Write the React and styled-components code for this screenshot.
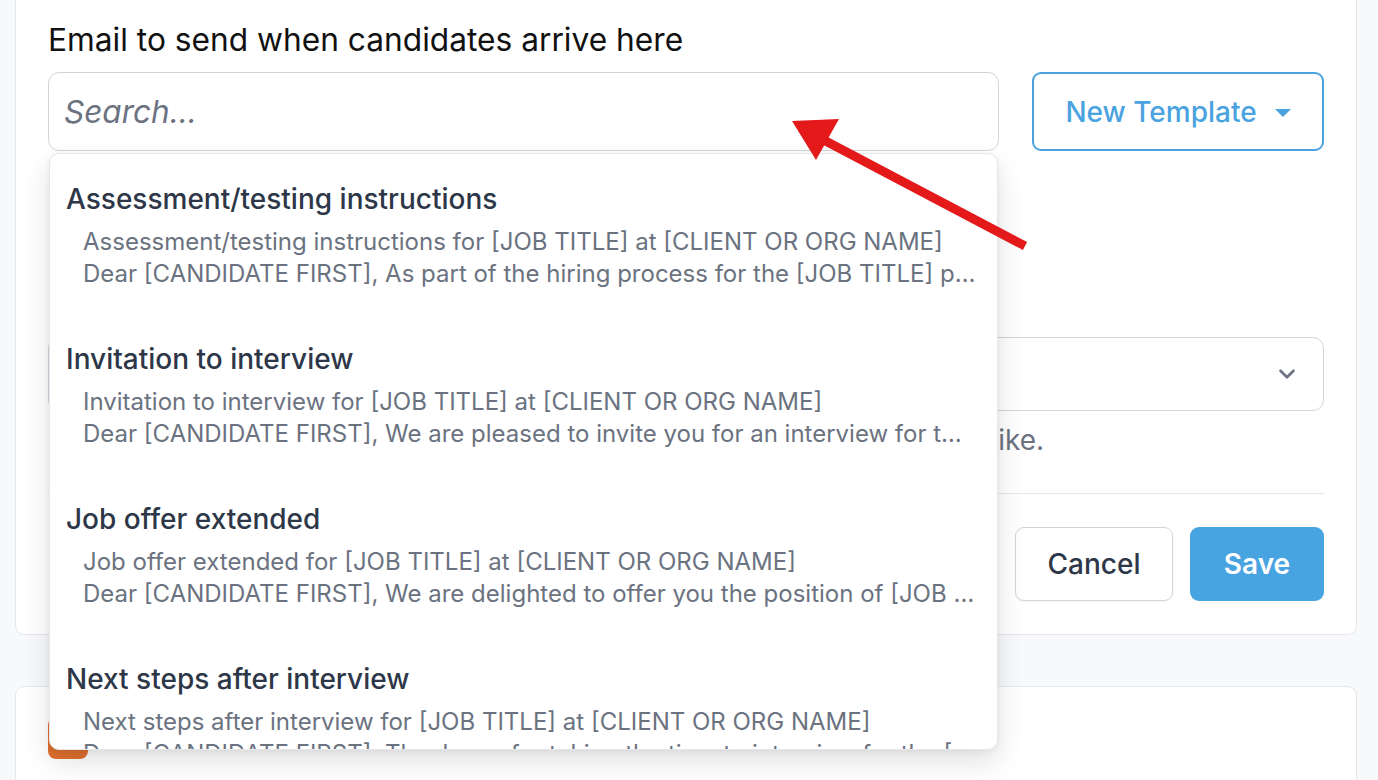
import React from 'react';
import styled, { createGlobalStyle } from 'styled-components';
import { ChevronDown } from 'lucide-react';

const GlobalStyle = createGlobalStyle`
  html, body {
    margin: 0;
    padding: 0;
    background: #f8f9fb;
    font-family: Inter, "Noto Sans", "Liberation Sans", sans-serif;
    -webkit-font-smoothing: antialiased;
  }
  * { box-sizing: border-box; }
`;

const templates = [
  {
    title: 'Assessment/testing instructions',
    subject: 'Assessment/testing instructions for [JOB TITLE] at [CLIENT OR ORG NAME]',
    body: 'Dear [CANDIDATE FIRST], As part of the hiring process for the [JOB TITLE] position, we would like you to complete a short assessment.',
  },
  {
    title: 'Invitation to interview',
    subject: 'Invitation to interview for [JOB TITLE] at [CLIENT OR ORG NAME]',
    body: 'Dear [CANDIDATE FIRST], We are pleased to invite you for an interview for the [JOB TITLE] position at [CLIENT OR ORG NAME].',
  },
  {
    title: 'Job offer extended',
    subject: 'Job offer extended for [JOB TITLE] at [CLIENT OR ORG NAME]',
    body: 'Dear [CANDIDATE FIRST], We are delighted to offer you the position of [JOB TITLE] at [CLIENT OR ORG NAME].',
  },
  {
    title: 'Next steps after interview',
    subject: 'Next steps after interview for [JOB TITLE] at [CLIENT OR ORG NAME]',
    body: 'Dear [CANDIDATE FIRST], Thank you for taking the time to interview for the [JOB TITLE] position with us.',
  },
];

export default function App() {
  return (
    <Page>
      <GlobalStyle />
      <Card>
        <FieldLabel>Email to send when candidates arrive here</FieldLabel>
        <SearchRow>
          <SearchWrap>
            <SearchInput placeholder="Search..." />
            <Dropdown>
              {templates.map((t) => (
                <Option key={t.title}>
                  <OptionTitle>{t.title}</OptionTitle>
                  <OptionLine>{t.subject}</OptionLine>
                  <OptionLine>{t.body}</OptionLine>
                </Option>
              ))}
            </Dropdown>
          </SearchWrap>
          <OutlineButton>
            New Template
            <Caret />
          </OutlineButton>
        </SearchRow>

        <Field>
          <Select>
            <ChevronDown size={26} strokeWidth={2.4} color="#6b7280" />
          </Select>
          <Helper>Choose the sender. You can change this in the settings at any time you like.</Helper>
        </Field>

        <Divider />

        <Actions>
          <CancelButton>Cancel</CancelButton>
          <SaveButton>Save</SaveButton>
        </Actions>
      </Card>

      <Card $next>
        <Badge />
      </Card>

      <Annotation width="1378" height="780" viewBox="0 0 1378 780">
        <line x1="1025" y1="246" x2="818" y2="137" stroke="#e3191a" strokeWidth="9" />
        <polygon points="792,121 839,119 816,160" fill="#e3191a" />
      </Annotation>
    </Page>
  );
}

const Page = styled.div`
  position: relative;
  width: 1378px;
  height: 780px;
  overflow: hidden;
  padding: 0 21px 0 15px;
`;

const Card = styled.div`
  background: #fff;
  border: 1.5px solid #e5e7eb;
  border-top: ${(p) => (p.$next ? '1.5px solid #e5e7eb' : 'none')};
  border-radius: ${(p) => (p.$next ? '9px 9px 0 0' : '0 0 9px 9px')};
  padding: ${(p) => (p.$next ? '30px 32px 40px' : '20px 32px 33px')};
  margin-top: ${(p) => (p.$next ? '51px' : '0')};
  min-height: ${(p) => (p.$next ? '200px' : 'auto')};
`;

const FieldLabel = styled.div`
  font-size: 31.7px;
  line-height: 40px;
  color: #111;
`;

const SearchRow = styled.div`
  display: flex;
  gap: 33px;
  margin-top: 12px;
`;

const SearchWrap = styled.div`
  position: relative;
  flex: 1;
`;

const SearchInput = styled.input`
  display: block;
  width: 100%;
  height: 79px;
  border: 1.5px solid #d1d5db;
  border-radius: 11px;
  padding: 0 15px;
  font-family: inherit;
  font-size: 31.5px;
  color: #111;
  background: #fff;
  outline: none;
  &::placeholder {
    font-style: italic;
    color: #6b7280;
  }
`;

const Dropdown = styled.div`
  position: absolute;
  top: calc(100% + 2px);
  left: 1px;
  right: 1px;
  height: 597px;
  overflow: hidden;
  background: #fff;
  border: 1.5px solid #e5e7eb;
  border-radius: 10px;
  box-shadow: 0 12px 28px rgba(0, 0, 0, 0.12), 0 2px 6px rgba(0, 0, 0, 0.05);
  z-index: 5;
`;

const Option = styled.div`
  padding: 27px 21px 24px 16px;
`;

const OptionTitle = styled.div`
  font-size: 28px;
  line-height: 36px;
  font-weight: 500;
  color: #2d3748;
`;

const OptionLine = styled.div`
  font-size: 24px;
  line-height: 32px;
  color: #6b7280;
  padding-left: 17px;
  white-space: nowrap;
  overflow: hidden;
  text-overflow: ellipsis;
  &:nth-of-type(2) {
    margin-top: 9px;
  }
`;

const OutlineButton = styled.button`
  width: 292px;
  height: 79px;
  display: flex;
  align-items: center;
  justify-content: center;
  gap: 18px;
  background: #fff;
  border: 2px solid #4aa3df;
  border-radius: 9px;
  color: #4aa3df;
  font-family: inherit;
  font-size: 28px;
  font-weight: 500;
`;

const Caret = styled.span`
  width: 0;
  height: 0;
  border-left: 8px solid transparent;
  border-right: 8px solid transparent;
  border-top: 8px solid #4aa3df;
  margin-top: 2px;
`;

const Field = styled.div`
  margin-top: 186px;
`;

const Select = styled.div`
  height: 74px;
  border: 1.5px solid #d1d5db;
  border-radius: 11px;
  display: flex;
  align-items: center;
  justify-content: flex-end;
  padding: 0 23px 0 16px;
`;

const Helper = styled.div`
  margin-top: 11px;
  font-size: 28px;
  line-height: 36px;
  color: #6b7280;
`;

const Divider = styled.hr`
  margin: 35px 0 0;
  border: none;
  border-top: 1.5px solid #e5e7eb;
`;

const Actions = styled.div`
  display: flex;
  justify-content: flex-end;
  gap: 17px;
  margin-top: 33px;
`;

const BaseButton = styled.button`
  height: 74px;
  border-radius: 9px;
  font-family: inherit;
  font-size: 28px;
  font-weight: 500;
`;

const CancelButton = styled(BaseButton)`
  width: 158px;
  background: #fff;
  border: 1.5px solid #d1d5db;
  color: #2d3748;
  box-shadow: 0 1px 2px rgba(0, 0, 0, 0.05);
`;

const SaveButton = styled(BaseButton)`
  width: 134px;
  background: #48a3e1;
  border: none;
  color: #fff;
  font-weight: 600;
`;

const Badge = styled.div`
  width: 40px;
  height: 42px;
  background: #e0702f;
  border-radius: 8px;
`;

const Annotation = styled.svg`
  position: absolute;
  top: 0;
  left: 0;
  pointer-events: none;
  z-index: 20;
`;
